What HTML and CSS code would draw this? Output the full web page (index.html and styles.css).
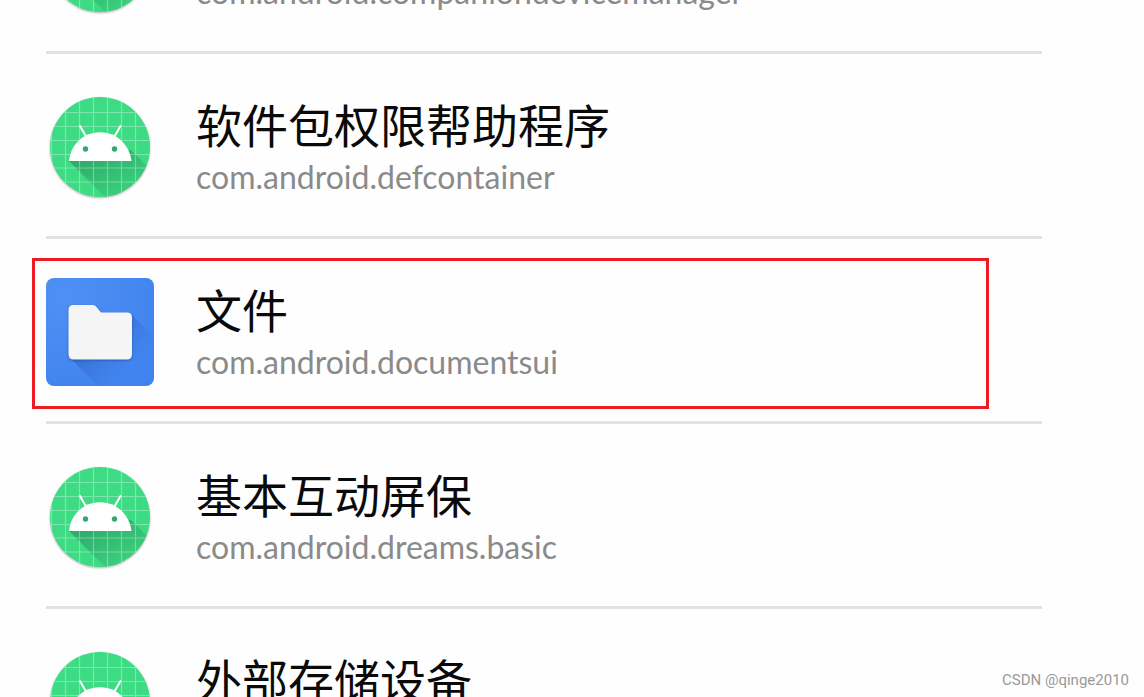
FILE: index.html
```html
<!DOCTYPE html>
<html lang="zh-CN">
<head>
<meta charset="utf-8">
<title>应用列表</title>
<link rel="stylesheet" href="styles.css">
</head>
<body>
<svg class="sprite" aria-hidden="true">
  <defs>
    <linearGradient id="cast" gradientUnits="userSpaceOnUse" x1="50" y1="62" x2="70" y2="104">
      <stop offset="0" stop-color="#1f7a50" stop-opacity=".48"/>
      <stop offset="1" stop-color="#1f7a50" stop-opacity=".12"/>
    </linearGradient>
    <clipPath id="disc"><circle cx="54" cy="54" r="50"/></clipPath>
    <radialGradient id="blue" cx=".15" cy=".15" r="1">
      <stop offset="0" stop-color="#5090f4"/>
      <stop offset="1" stop-color="#4083ee"/>
    </radialGradient>
    <linearGradient id="fold" gradientUnits="userSpaceOnUse" x1="50" y1="50" x2="86" y2="86">
      <stop offset="0" stop-color="#2a5fc0" stop-opacity=".6"/>
      <stop offset="1" stop-color="#2a5fc0" stop-opacity="0"/>
    </linearGradient>
    <clipPath id="tile"><rect width="108" height="108" rx="8"/></clipPath>
    <symbol id="android" viewBox="0 0 108 108">
      <circle cx="54" cy="54" r="50" fill="#3ddc84"/>
      <g clip-path="url(#disc)">
        <path d="M23 68 85 57 112 84V112H67Z" fill="url(#cast)"/>
        <path d="M5.500 0V108M19.500 0V108M33.500 0V108M47.500 0V108M61.500 0V108M75.500 0V108M89.500 0V108M0 19.500H108M0 33.500H108M0 47.500H108M0 61.500H108M0 75H108M0 89H108" stroke="#fff" stroke-opacity=".33" stroke-width="1.200" fill="none"/>
      </g>
      <path d="M34 33 40 43.500M74.500 33 68.500 43.500" stroke="#fff" stroke-width="2" stroke-linecap="round"/>
      <path d="M23 68C24 57 30 48 39 43C48 38 60 38 69 43C78 48 84 57 85.500 68Z" fill="#fff"/>
      <circle cx="39.500" cy="56" r="2.700" fill="#35a571"/>
      <circle cx="68.500" cy="56" r="2.700" fill="#35a571"/>
    </symbol>
    <symbol id="folder" viewBox="0 0 108 108">
      <rect width="108" height="108" rx="8" fill="url(#blue)"/>
      <g clip-path="url(#tile)">
        <path d="M24 80 85 36 130 81V130H74Z" fill="url(#fold)"/>
      </g>
      <path class="folder-shape" d="M27.500 27H47Q49 27 50.500 29L55 34.500H81Q86 34.500 86 39.500V76Q86 81.500 81 81.500H27.500Q22.500 81.500 22.500 76V32Q22.500 27 27.500 27Z" fill="#f5f5f5"/>
    </symbol>
  </defs>
</svg>
<main>
  <ul class="apps">
    <li class="app">
      <svg class="icon round" aria-hidden="true"><use href="#android"/></svg>
      <div class="info"><p class="package">com.android.companiondevicemanager</p></div>
    </li>
    <li class="app">
      <svg class="icon round" aria-hidden="true"><use href="#android"/></svg>
      <div class="info"><h2 class="name">软件包权限帮助程序</h2><p class="package">com.android.defcontainer</p></div>
    </li>
    <li class="app marked">
      <svg class="icon" aria-hidden="true"><use href="#folder"/></svg>
      <div class="info"><h2 class="name">文件</h2><p class="package">com.android.documentsui</p></div>
    </li>
    <li class="app">
      <svg class="icon round" aria-hidden="true"><use href="#android"/></svg>
      <div class="info"><h2 class="name">基本互动屏保</h2><p class="package">com.android.dreams.basic</p></div>
    </li>
    <li class="app">
      <svg class="icon round" aria-hidden="true"><use href="#android"/></svg>
      <div class="info"><h2 class="name">外部存储设备</h2><p class="package">com.android.externalstorage</p></div>
    </li>
  </ul>
</main>
<p class="credit">CSDN @qinge2010</p>
</body>
</html>
```
FILE: styles.css
```css
* {
  box-sizing: border-box;
  margin: 0;
  padding: 0;
}

body {
  height: 100vh;
  overflow: hidden;
  background: #fefefe;
  font-family: "Noto Sans CJK SC", sans-serif;
}

.sprite {
  position: absolute;
  width: 0;
  height: 0;
}

/* The list is scrolled part-way through its first row */
.apps {
  list-style: none;
  margin: -131px 102px 0 46px;
}

.app {
  position: relative;
  display: flex;
  gap: 42px;
  padding: 39px 0 35px;
  border-bottom: 3px solid #e2e2e2;
}

.icon {
  flex: none;
  width: 108px;
  height: 108px;
}

.round {
  filter: drop-shadow(0 1px 1px rgba(0, 0, 0, 0.3));
}

.folder-shape {
  filter: drop-shadow(0 1px 1px rgba(20, 50, 120, 0.5));
}

.info {
  display: flex;
  flex-direction: column;
  justify-content: flex-end;
  gap: 4px;
  height: 104px;
}

.name {
  font-size: 46px;
  font-weight: 400;
  line-height: 60px;
  color: #0a0a0a;
}

.package {
  font-family: Lato, sans-serif;
  font-size: 32px;
  line-height: 40px;
  color: #8a8a8a;
}

.marked::after {
  content: "";
  position: absolute;
  inset: 19px 53px 12px -14px;
  border: 3px solid #ed1c24;
}

.credit {
  position: absolute;
  right: 15px;
  bottom: 7px;
  font-family: Roboto, sans-serif;
  font-size: 15px;
  line-height: 20px;
  color: #999;
}
```
